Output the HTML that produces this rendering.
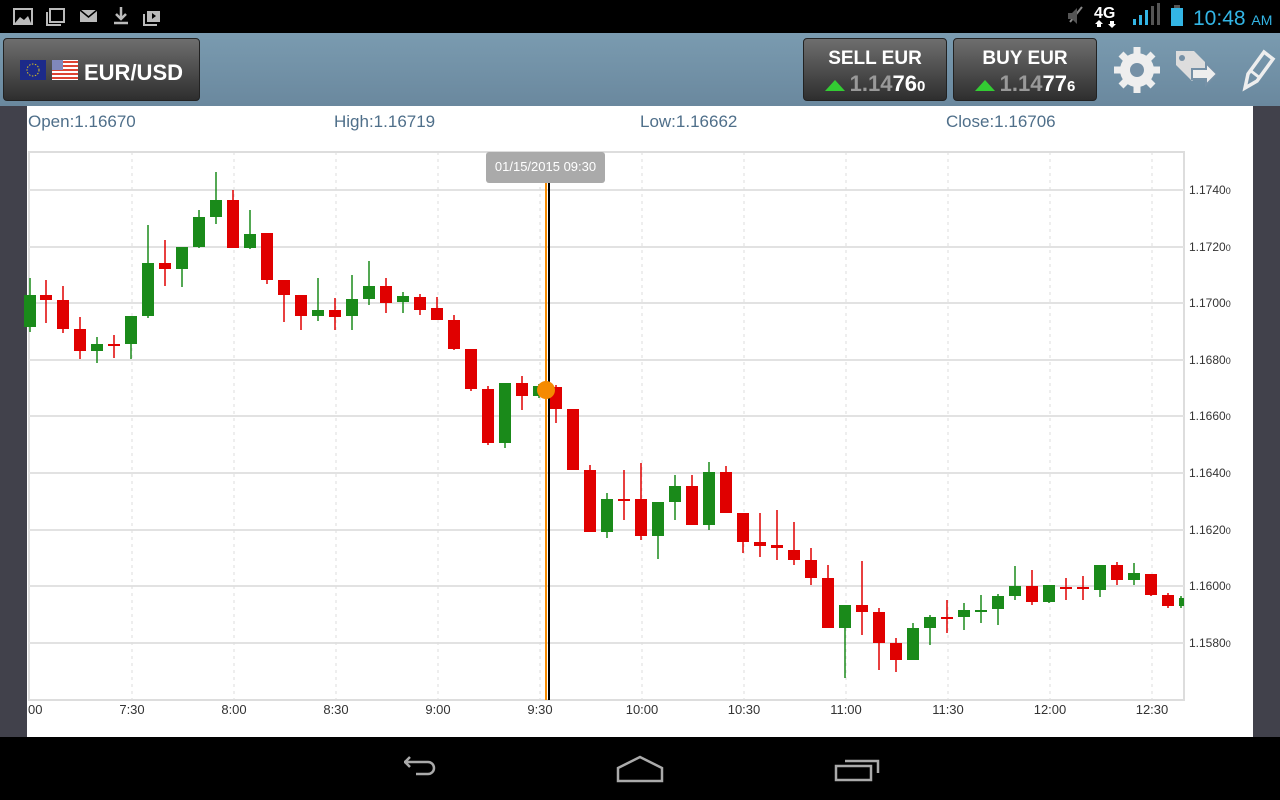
<!DOCTYPE html>
<html><head><meta charset="utf-8"><style>
*{margin:0;padding:0;box-sizing:border-box}
body{width:1280px;height:800px;overflow:hidden;background:#000;font-family:"Liberation Sans",sans-serif;position:relative}
.sb{position:absolute;top:0;left:0;width:1280px;height:33px;background:#000}
.hdr{position:absolute;top:33px;left:0;width:1280px;height:73px;background:linear-gradient(#7a9bb0,#6a889e)}
.btn{position:absolute;top:5px;height:63px;border-radius:4px;background:linear-gradient(#6e6e6e,#2e2e2e);border:1px solid #222;color:#fff;font-weight:bold}
.side{position:absolute;top:106px;height:631px;background:#41414b}
.main{position:absolute;left:27px;top:106px;width:1226px;height:631px;background:#fff}
.ohlc{position:absolute;top:112px;color:#4f6f8a;font-size:17px}
.nav{position:absolute;top:737px;left:0;width:1280px;height:63px;background:#000}
</style></head><body>
<div class="sb">
<svg width="1280" height="33" style="position:absolute;left:0;top:0">
<g fill="#bbb" stroke="#bbb">
<rect x="14" y="9" width="18" height="15" fill="none" stroke-width="2"/><path d="M15 23 L20 17 L24 20 L28 16 L31 23Z" stroke="none"/>
<rect x="50" y="9" width="14" height="13" fill="none" stroke-width="2"/><path d="M47 12v13h14" fill="none" stroke-width="2"/>
<rect x="80" y="10" width="17" height="12" stroke="none"/><path d="M80 10l8.5 7 8.5-7" stroke="#000" stroke-width="1.5" fill="none"/>
<path d="M121 7v11M116 14l5 5 5-5M114 23h14" fill="none" stroke-width="2.5"/>
<rect x="147" y="11" width="13" height="11" stroke="none"/><path d="M144 14v11h13" fill="none" stroke-width="2"/><path d="M152 13l4 3-4 3z" fill="#000" stroke="none"/>
</g>
<path d="M1070 22l12-15" stroke="#888" stroke-width="2"/><path d="M1068 13h4l5-5v16l-5-5h-4z" fill="#555"/>
<text x="1094" y="18" fill="#fff" font-size="16" font-weight="bold">4G</text>
<path d="M1099 20l4 4h-2v3h-4v-3h-2zM1112 28l4-4h-2v-3h-4v3h-2z" fill="#fff"/>
<rect x="1133" y="19" width="3" height="6" fill="#33b5e5"/><rect x="1139" y="15" width="3" height="10" fill="#33b5e5"/><rect x="1145" y="10" width="3" height="15" fill="#33b5e5"/><rect x="1151" y="6" width="3" height="19" fill="#555"/><rect x="1157" y="3" width="3" height="22" fill="#555"/>
<rect x="1171" y="8" width="12" height="18" fill="#33b5e5"/><rect x="1174" y="5" width="6" height="3" fill="#555"/>
<text x="1193" y="25" fill="#33b5e5" font-size="21">10:48 <tspan font-size="14">AM</tspan></text>
</svg></div>
<div class="hdr">
<div class="btn" style="left:3px;width:197px">
<svg width="60" height="30" style="position:absolute;left:15px;top:18px"><rect x="1" y="3" width="26" height="20" fill="#1c2a8a"/><circle cx="14" cy="13" r="6" fill="none" stroke="#d8c020" stroke-dasharray="1.5 1.5"/><rect x="33" y="3" width="26" height="20" fill="#fff"/><g fill="#d43"><rect x="33" y="4" width="26" height="2"/><rect x="33" y="8" width="26" height="2"/><rect x="33" y="12" width="26" height="2"/><rect x="33" y="16" width="26" height="2"/><rect x="33" y="20" width="26" height="2"/></g><rect x="33" y="3" width="11" height="10" fill="#8088bb"/></svg>
<span style="position:absolute;left:80px;top:21px;font-size:22px">EUR/USD</span></div>
<div class="btn" style="left:803px;width:144px;text-align:center"><div style="font-size:19px;margin-top:9px">SELL EUR</div><div style="font-size:22px;margin-top:1px"><span style="display:inline-block;width:0;height:0;border-left:10px solid transparent;border-right:10px solid transparent;border-bottom:11px solid #3c3;margin-right:5px"></span><span style="color:#999">1.14</span>76<span style="font-size:15px">0</span></div></div>
<div class="btn" style="left:953px;width:144px;text-align:center"><div style="font-size:19px;margin-top:9px">BUY EUR</div><div style="font-size:22px;margin-top:1px"><span style="display:inline-block;width:0;height:0;border-left:10px solid transparent;border-right:10px solid transparent;border-bottom:11px solid #3c3;margin-right:5px"></span><span style="color:#999">1.14</span>77<span style="font-size:15px">6</span></div></div>
<svg width="170" height="73" style="position:absolute;left:1110px;top:0">
<g fill="#eee"><circle cx="27" cy="37" r="17"/><g stroke="#eee" stroke-width="7"><path d="M27 14v46M4 37h46M11 21l32 32M43 21l-32 32"/></g><circle cx="27" cy="37" r="7" fill="#7590a6"/></g>
<path d="M66 18h18l14 14-16 16-16-16z" fill="#ddd"/><circle cx="72" cy="25" r="3" fill="#7590a6"/><path d="M82 36h14v-6l11 11-11 11v-6h-14z" fill="#eee" stroke="#7590a6" stroke-width="2"/>
<path d="M135 55l3-14 16-22 9 7-16 22z" fill="none" stroke="#eee" stroke-width="3.5"/><path d="M141 38l9 7" stroke="#eee" stroke-width="3"/>
</svg>
</div>
<div class="side" style="left:0;width:27px"></div>
<div class="side" style="left:1253px;width:27px"></div>
<div class="main"></div>
<div class="ohlc" style="left:28px">Open:1.16670</div>
<div class="ohlc" style="left:334px">High:1.16719</div>
<div class="ohlc" style="left:640px">Low:1.16662</div>
<div class="ohlc" style="left:946px">Close:1.16706</div>
<svg id="ch" width="1280" height="737" style="position:absolute;left:0;top:0"></svg>
<div class="nav"><svg width="1280" height="63" style="position:absolute;left:0;top:0" fill="none" stroke="#aaa" stroke-width="2.5">
<path d="M410 25h24a6 6 0 0 1 0 12h-12M411 25l5-5M411 25l5 5" transform="translate(-6,0)"/>
<path d="M618 44v-13l22-11 22 11v13z"/>
<rect x="836" y="29" width="35" height="14"/><path d="M845 24h33v12"/>
</svg></div>
<script>
var s='';
s+='<rect x="29" y="152" width="1155" height="548" fill="none" stroke="#ddd" stroke-width="2"/>';
[190,247,303,360,416,473,530,586,643].forEach(function(y,i){s+='<line x1="29" x2="1184" y1="'+y+'" y2="'+y+'" stroke="#e2e2e2" stroke-width="2"/>';s+='<text x="1189" y="'+(y+4)+'" font-size="12" fill="#333">1.'+(1740-i*20)+'<tspan font-size="9">0</tspan></text>';});
var t=['7:30','8:00','8:30','9:00','9:30','10:00','10:30','11:00','11:30','12:00','12:30'];
for(var i=0;i<12;i++){var x=132+i*102;if(x<1184)s+='<line x1="'+x+'" x2="'+x+'" y1="152" y2="700" stroke="#ddd" stroke-dasharray="3 4"/>';if(t[i])s+='<text x="'+x+'" y="714" font-size="13" fill="#333" text-anchor="middle">'+t[i]+'</text>';}
s+='<text x="28" y="714" font-size="13" fill="#333">00</text>';
var c=[[30,'g',295,327,278,332],[46,'r',295,300,280,323],[63,'r',300,329,286,333],[80,'r',329,351,317,359],[97,'g',344,351,337,363],[114,'r',344,345,335,358],[131,'g',316,344,316,359],[148,'g',263,316,225,318],[165,'r',263,269,240,286],[182,'g',247,269,247,287],[199,'g',217,247,210,248],[216,'g',200,217,172,224],[233,'r',200,248,190,248],[250,'g',234,248,210,249],[267,'r',233,280,233,284],[284,'r',280,295,280,322],[301,'r',295,316,295,330],[318,'g',310,316,278,321],[335,'r',310,317,298,330],[352,'g',299,316,275,330],[369,'g',286,299,261,305],[386,'r',286,303,278,313],[403,'g',296,302,292,313],[420,'r',297,310,294,315],[437,'r',308,320,297,320],[454,'r',320,349,315,350],[471,'r',349,389,349,391],[488,'r',389,443,386,445],[505,'g',383,443,383,448],[522,'r',383,396,376,410],[539,'g',386,396,384,398],[556,'r',387,409,385,423],[573,'r',409,470,409,470],[590,'r',470,532,465,532],[607,'g',499,532,493,538],[624,'r',499,500,470,520],[641,'r',499,536,463,540],[658,'g',502,536,502,559],[675,'g',486,502,475,520],[692,'r',486,525,475,525],[709,'g',472,525,462,530],[726,'r',472,513,466,513],[743,'r',513,542,513,553],[760,'r',542,546,513,557],[777,'r',545,548,510,560],[794,'r',550,560,522,565],[811,'r',560,578,548,585],[828,'r',578,628,565,628],[845,'g',605,628,605,678],[862,'r',605,612,561,635],[879,'r',612,643,608,670],[896,'r',643,660,638,672],[913,'g',628,660,623,660],[930,'g',617,628,615,645],[947,'r',617,618,600,633],[964,'g',610,617,603,630],[981,'g',610,611,595,623],[998,'g',596,609,594,625],[1015,'g',586,596,566,600],[1032,'r',586,602,570,605],[1049,'g',585,602,585,603],[1066,'r',587,588,578,600],[1083,'r',587,588,576,600],[1100,'g',565,590,565,597],[1117,'r',565,580,562,585],[1134,'g',573,580,563,585],[1151,'r',574,595,574,596],[1168,'r',595,606,593,608],[1181,'g',598,606,596,608]];
c.forEach(function(d){var col=d[1]=='g'?'#1a8a1a':'#e00000';var w=d[0]==1181?5:12;var x0=d[0]==1181?1179:d[0]-6;
s+='<line x1="'+d[0]+'" x2="'+d[0]+'" y1="'+d[4]+'" y2="'+d[5]+'" stroke="'+col+'" stroke-width="1.5"/>';
s+='<rect x="'+x0+'" y="'+d[2]+'" width="'+w+'" height="'+Math.max(2,d[3]-d[2])+'" fill="'+col+'"/>';});
s+='<rect x="545" y="183" width="2" height="517" fill="#f58a00"/><rect x="548" y="183" width="2" height="517" fill="#000"/>';
s+='<circle cx="546" cy="390" r="9" fill="#f58a00"/>';
s+='<rect x="486" y="152" width="119" height="31" rx="3" fill="#aaa"/><text x="545.5" y="171" font-size="13" fill="#fff" text-anchor="middle">01/15/2015 09:30</text>';
document.getElementById('ch').innerHTML=s;
</script>
</body></html>
